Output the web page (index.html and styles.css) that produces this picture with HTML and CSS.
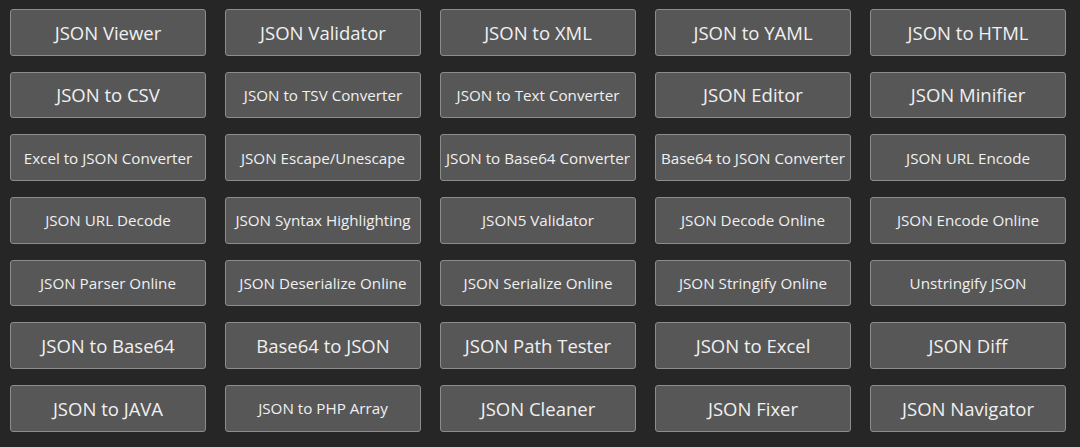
FILE: index.html
```html
<!DOCTYPE html>
<html>
<head>
    <meta charset="UTF-8">
    <meta name="viewport" content="width=device-width, initial-scale=1.0">
    <title>JSON Tools</title>
    <link rel="stylesheet" href="styles.css">
</head>
<body>
    <div class="tools">
        <a class="tool" href="#">JSON Viewer</a>
        <a class="tool" href="#">JSON Validator</a>
        <a class="tool" href="#">JSON to XML</a>
        <a class="tool" href="#">JSON to YAML</a>
        <a class="tool" href="#">JSON to HTML</a>

        <a class="tool" href="#">JSON to CSV</a>
        <a class="tool small" href="#">JSON to TSV Converter</a>
        <a class="tool small" href="#">JSON to Text Converter</a>
        <a class="tool" href="#">JSON Editor</a>
        <a class="tool" href="#">JSON Minifier</a>

        <a class="tool small" href="#">Excel to JSON Converter</a>
        <a class="tool small" href="#">JSON Escape/Unescape</a>
        <a class="tool small" href="#">JSON to Base64 Converter</a>
        <a class="tool small" href="#">Base64 to JSON Converter</a>
        <a class="tool small" href="#">JSON URL Encode</a>

        <a class="tool small" href="#">JSON URL Decode</a>
        <a class="tool small" href="#">JSON Syntax Highlighting</a>
        <a class="tool small" href="#">JSON5 Validator</a>
        <a class="tool small" href="#">JSON Decode Online</a>
        <a class="tool small" href="#">JSON Encode Online</a>

        <a class="tool small" href="#">JSON Parser Online</a>
        <a class="tool small" href="#">JSON Deserialize Online</a>
        <a class="tool small" href="#">JSON Serialize Online</a>
        <a class="tool small" href="#">JSON Stringify Online</a>
        <a class="tool small" href="#">Unstringify JSON</a>

        <a class="tool" href="#">JSON to Base64</a>
        <a class="tool" href="#">Base64 to JSON</a>
        <a class="tool" href="#">JSON Path Tester</a>
        <a class="tool" href="#">JSON to Excel</a>
        <a class="tool" href="#">JSON Diff</a>

        <a class="tool" href="#">JSON to JAVA</a>
        <a class="tool small" href="#">JSON to PHP Array</a>
        <a class="tool" href="#">JSON Cleaner</a>
        <a class="tool" href="#">JSON Fixer</a>
        <a class="tool" href="#">JSON Navigator</a>
    </div>
</body>
</html>
```

FILE: styles.css
```css
html, body { background: #262626; }
body {
    margin: 0;
    font-family: 'Open Sans', 'Noto Sans', sans-serif;
}
.tools {
    display: grid;
    grid-template-columns: repeat(5, 196px);
    column-gap: 19px;
    row-gap: 16px;
    padding: 9px 10px;
}
.tool {
    box-sizing: border-box;
    height: 46.67px;
    display: flex;
    align-items: center;
    justify-content: center;
    background: #575757;
    border: 1px solid #8c8c8c;
    border-radius: 3px;
    color: #f0f0f0;
    font-size: 18.5px;
    text-decoration: none;
    white-space: nowrap;
}
.tool.small { font-size: 15.2px; }
```
